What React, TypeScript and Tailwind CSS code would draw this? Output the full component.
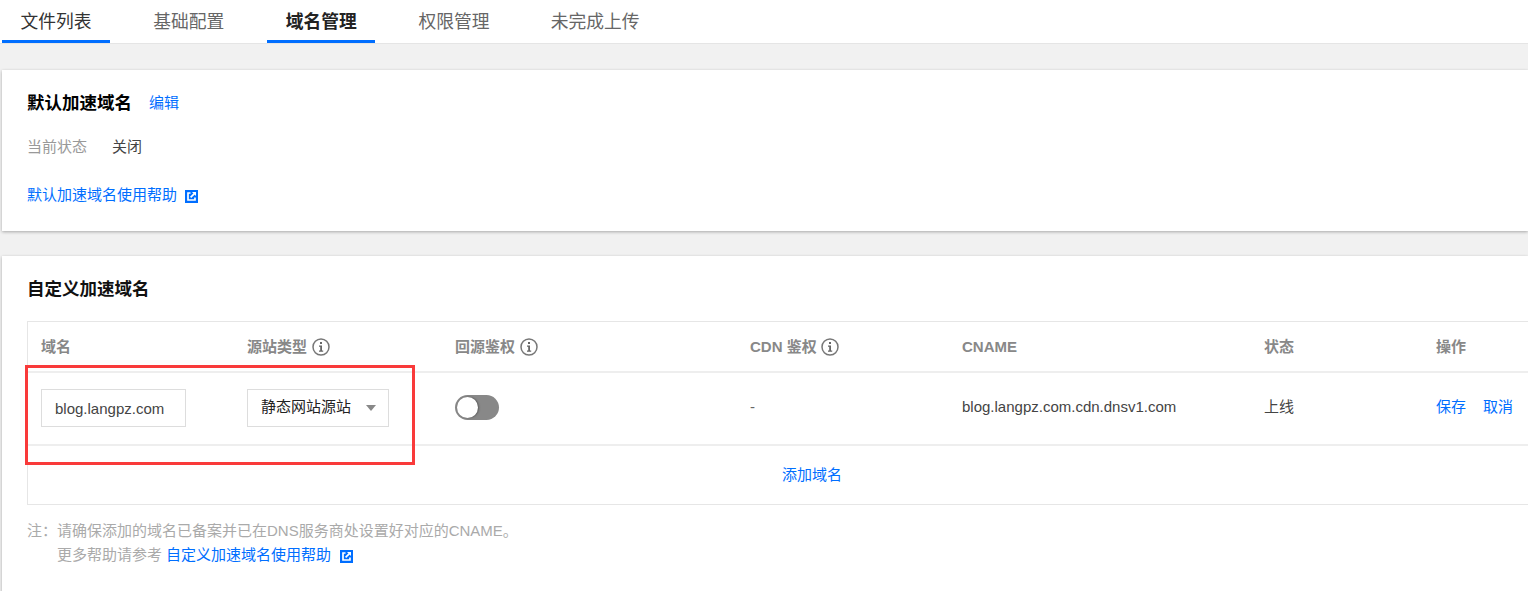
import React from "react";

const font = { fontFamily: '"Liberation Sans", Arial, "Noto Sans CJK SC", sans-serif' };

function Ext() {
  return (
    <svg width="13" height="13" viewBox="0 0 13 13" className="shrink-0 block">
      <rect width="13" height="13" fill="#006eff" />
      <path d="M5.5 3H3V10H10V7.5" fill="none" stroke="#fff" strokeWidth="1.7" />
      <path d="M5.6 7.4L9.4 3.6" fill="none" stroke="#fff" strokeWidth="1.7" />
      <path d="M7 2H11V6Z" fill="#fff" />
    </svg>
  );
}

function Info() {
  return (
    <svg width="18" height="18" viewBox="0 0 18 18" className="shrink-0">
      <circle cx="9" cy="9" r="8" fill="none" stroke="#777" strokeWidth="1.5" />
      <rect x="8" y="4" width="2" height="2" fill="#666" />
      <path d="M7 7.5H10V12.5H11.2V13.8H7V12.5H8.2V8.8H7Z" fill="#666" />
    </svg>
  );
}

const tabs = [
  { t: "文件列表", cls: "text-[#333] border-[#006eff]" },
  { t: "基础配置", cls: "text-[#666] border-transparent" },
  { t: "域名管理", cls: "text-[#222] font-bold border-[#006eff]" },
  { t: "权限管理", cls: "text-[#666] border-transparent" },
  { t: "未完成上传", cls: "text-[#666] border-transparent" },
];

const cols = "grid grid-cols-[206px_208px_295px_212px_302px_172px_1fr] items-center";

export default function App() {
  return (
    <div style={font} className="w-[1528px] h-[591px] overflow-hidden bg-[#f1f1f1] text-[15px]">
      <div className="h-[44px] bg-white border-b border-[#e5e5e5] flex pl-[2px] gap-[24.7px]">
        {tabs.map((x) => (
          <div key={x.t} className={`min-w-[108px] h-[43px] px-[18px] border-b-[3px] text-[17.75px] leading-[44px] text-center ${x.cls}`}>
            {x.t}
          </div>
        ))}
      </div>

      <section className="mt-[26px] ml-[2px] h-[161px] bg-white shadow-[0_1px_3px_rgba(0,0,0,0.3)] pl-[25px] pt-[22px]">
        <div className="flex items-center h-[22px]">
          <span className="text-[17.5px] font-bold text-black">默认加速域名</span>
          <span className="ml-[17px] text-[#006eff]">编辑</span>
        </div>
        <div className="flex mt-[22px] h-[22px] items-center">
          <span className="w-[85px] text-[#999]">当前状态</span>
          <span className="text-[#444]">关闭</span>
        </div>
        <div className="flex items-center mt-[26px] h-[22px] text-[#006eff]">
          <span>默认加速域名使用帮助</span>
          <span className="ml-[8px] mt-[2px]"><Ext /></span>
        </div>
      </section>

      <section className="mt-[25px] ml-[2px] h-[400px] bg-white shadow-[0_1px_3px_rgba(0,0,0,0.3)] pl-[25px] pt-[21px]">
        <h2 className="text-[17.5px] leading-[24px] font-bold text-[#111]">自定义加速域名</h2>
        <div className="relative mt-[20px] w-[1520px] border border-[#e6e6e6] text-[#444]">
          <div className={`${cols} h-[51px] pt-[1px] border-b-2 border-[#eeeeee] font-bold text-[#888]`}>
            <span className="pl-[13px]">域名</span>
            <span className="pl-[13px] flex items-center gap-[5px]">源站类型 <Info /></span>
            <span className="pl-[13px] flex items-center gap-[5px]">回源鉴权 <Info /></span>
            <span className="pl-[13px] flex items-center gap-[4px]">CDN 鉴权 <Info /></span>
            <span className="pl-[13px]">CNAME</span>
            <span className="pl-[13px]">状态</span>
            <span className="pl-[13px]">操作</span>
          </div>
          <div className={`${cols} h-[73px] pb-[2px] border-b-2 border-[#eeeeee]`}>
            <div className="pl-[13px]">
              <div className="w-[145px] h-[38px] border border-[#dddddd] pl-[13px] leading-[38px] text-[#444]">blog.langpz.com</div>
            </div>
            <div className="pl-[13px]">
              <div className="w-[142px] h-[38px] border border-[#dddddd] pl-[13px] pr-[12px] flex items-center justify-between text-[#222]">
                <span>静态网站源站</span>
                <span className="w-0 h-0 border-x-[5px] border-x-transparent border-t-[6px] border-t-[#888]" />
              </div>
            </div>
            <div className="pl-[13px]">
              <div className="w-[44px] h-[25px] rounded-full bg-[#888] p-[2px]">
                <div className="w-[21px] h-[21px] rounded-full bg-white shadow-[1px_0_2px_rgba(0,0,0,0.35)]" />
              </div>
            </div>
            <span className="pl-[13px] text-[#666]">-</span>
            <span className="pl-[13px]">blog.langpz.com.cdn.dnsv1.com</span>
            <span className="pl-[13px]">上线</span>
            <span className="pl-[13px] flex gap-[17px] text-[#006eff]"><span>保存</span><span>取消</span></span>
          </div>
          <div className="h-[58px] flex items-center text-[#006eff] pl-[754px]">添加域名</div>
          <div className="absolute left-[-3px] top-[43px] w-[390px] h-[100px] border-[3px] border-[#f93a3a]" />
        </div>
        <div className="mt-[14px] text-[#aaa] leading-[24px]">
          <div className="flex">
            <span className="w-[30px]">注：</span>
            <span>请确保添加的域名已备案并已在DNS服务商处设置好对应的CNAME。</span>
          </div>
          <div className="flex items-center pl-[30px]">
            <span>更多帮助请参考</span>
            <span className="ml-[4px] text-[#006eff]">自定义加速域名使用帮助</span>
            <span className="ml-[9px] mt-[2px]"><Ext /></span>
          </div>
        </div>
      </section>
    </div>
  );
}
